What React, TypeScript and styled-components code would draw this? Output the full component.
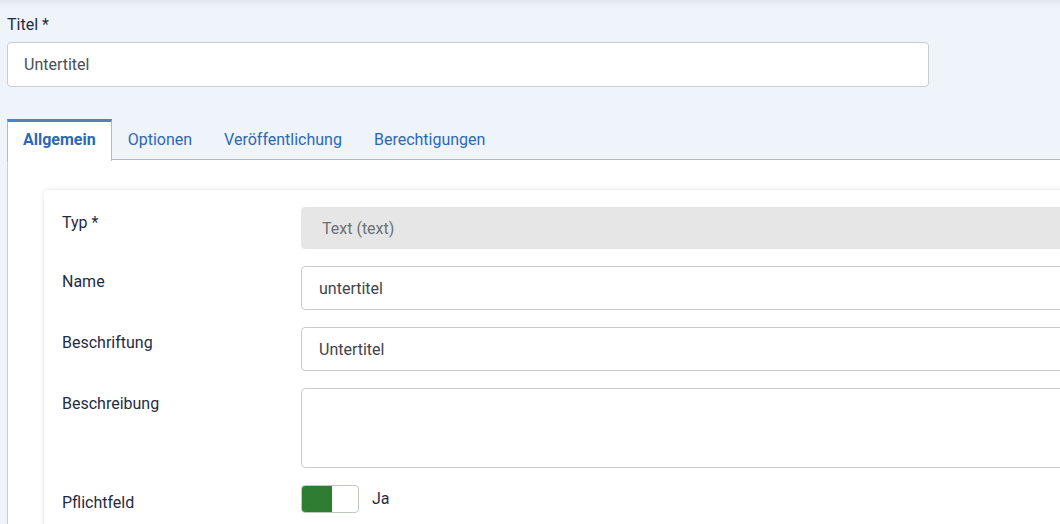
import React, { useState } from "react";
import styled, { createGlobalStyle } from "styled-components";

const GlobalStyle = createGlobalStyle`
    html, body {
        margin: 0;
        padding: 0;
        overflow: hidden;
    }
    body {
        background: #eff3fa;
        font-family: Roboto, "Liberation Sans", Arial, sans-serif;
        font-size: 16px;
        line-height: 1.5;
        color: #1f2c45;
    }
`;

const Page = styled.div`
    width: 100%;
    height: 524px;
    overflow: hidden;
    padding: 13px 0 0 7px;
    box-sizing: border-box;
    background: linear-gradient(#e2e7ee 0, #eef2f9 6px, #eff3fa 12px);
`;

const Label = styled.label`
    display: block;
    font-size: 16px;
    line-height: 24px;
    color: #1f2c45;
`;

const TitleInput = styled.input`
    display: block;
    box-sizing: border-box;
    width: 922px;
    height: 45px;
    margin-top: 5px;
    padding: 0 16px;
    border: 1px solid #c9cccf;
    border-radius: 4px;
    background: #fff;
    font: inherit;
    color: #4a4f55;
    outline: none;
`;

const TabList = styled.div`
    display: flex;
    margin-top: 32px;
    height: 41px;
    box-sizing: border-box;
    border-bottom: 1px solid #a9bbd2;
`;

const Tab = styled.button<{ $active?: boolean }>`
    box-sizing: border-box;
    height: ${(p) => (p.$active ? "42px" : "41px")};
    padding: 0 15px 4px;
    border: 0;
    background: ${(p) => (p.$active ? "#fff" : "transparent")};
    border-top: 3px solid ${(p) => (p.$active ? "#4f82c3" : "transparent")};
    border-left: 1px solid ${(p) => (p.$active ? "#a9bbd2" : "transparent")};
    border-right: 1px solid ${(p) => (p.$active ? "#a9bbd2" : "transparent")};
    font-family: inherit;
    font-size: 16px;
    font-weight: ${(p) => (p.$active ? 700 : 400)};
    color: #2a69b8;
    cursor: pointer;
`;

const TabPanel = styled.div`
    background: #fff;
    border-left: 1px solid #c3d0e2;
    margin-right: -60px;
    padding: 30px 0 0 36px;
    height: 400px;
`;

const Card = styled.div`
    background: #fff;
    border-radius: 5px;
    box-shadow: 0 0 5px rgba(0, 0, 0, 0.13);
    padding: 17px 0 0 18px;
    height: 360px;
`;

const FieldRow = styled.div`
    display: grid;
    grid-template-columns: 239px 1fr;
    align-items: start;
    margin-bottom: 17px;
`;

const FieldLabel = styled.div<{ $offset?: number }>`
    padding-top: ${(p) => p.$offset ?? 4}px;
    font-size: 16px;
    line-height: 24px;
    color: #1f2c45;
`;

const TextField = styled.input<{ $readOnly?: boolean }>`
    box-sizing: border-box;
    width: 100%;
    height: ${(p) => (p.$readOnly ? "42px" : "44px")};
    padding: 0 ${(p) => (p.$readOnly ? "20px" : "17px")};
    border: 1px solid ${(p) => (p.$readOnly ? "#e6e6e6" : "#c9cccf")};
    border-radius: 4px;
    background: ${(p) => (p.$readOnly ? "#e6e6e6" : "#fff")};
    font: inherit;
    color: ${(p) => (p.$readOnly ? "#6c7176" : "#3f444a")};
    outline: none;
`;

const TextArea = styled.textarea`
    box-sizing: border-box;
    width: 100%;
    height: 80px;
    padding: 8px 17px;
    border: 1px solid #c9cccf;
    border-radius: 4px;
    background: #fff;
    font: inherit;
    resize: none;
    outline: none;
    display: block;
`;

const SwitchWrap = styled.div`
    display: flex;
    align-items: center;
    gap: 13px;
    font-size: 16px;
    color: #1f2c45;
`;

const Switch = styled.button<{ $on: boolean }>`
    display: flex;
    width: 58px;
    height: 28px;
    padding: 0;
    box-sizing: border-box;
    border: 1px solid #bfc9bf;
    border-radius: 4px;
    background: #fff;
    overflow: hidden;
    cursor: pointer;
    justify-content: ${(p) => (p.$on ? "flex-start" : "flex-end")};
`;

const Knob = styled.span<{ $on: boolean }>`
    width: 30px;
    height: 100%;
    background: ${(p) => (p.$on ? "#2f7d33" : "#b8bcc0")};
`;

const tabs = ["Allgemein", "Optionen", "Veröffentlichung", "Berechtigungen"];

export default function App() {
    const [active, setActive] = useState(0);
    const [required, setRequired] = useState(true);

    return (
        <>
            <GlobalStyle />
            <Page>
                <Label>Titel *</Label>
                <TitleInput defaultValue="Untertitel" />

                <TabList>
                    {tabs.map((t, i) => (
                        <Tab key={t} $active={i === active} onClick={() => setActive(i)}>
                            {t}
                        </Tab>
                    ))}
                </TabList>

                <TabPanel>
                    <Card>
                        <FieldRow>
                            <FieldLabel>Typ *</FieldLabel>
                            <TextField $readOnly readOnly value="Text (text)" />
                        </FieldRow>
                        <FieldRow>
                            <FieldLabel>Name</FieldLabel>
                            <TextField defaultValue="untertitel" />
                        </FieldRow>
                        <FieldRow>
                            <FieldLabel>Beschriftung</FieldLabel>
                            <TextField defaultValue="Untertitel" />
                        </FieldRow>
                        <FieldRow>
                            <FieldLabel>Beschreibung</FieldLabel>
                            <TextArea />
                        </FieldRow>
                        <FieldRow>
                            <FieldLabel $offset={6}>Pflichtfeld</FieldLabel>
                            <SwitchWrap>
                                <Switch $on={required} onClick={() => setRequired(!required)}>
                                    <Knob $on={required} />
                                </Switch>
                                {required ? "Ja" : "Nein"}
                            </SwitchWrap>
                        </FieldRow>
                    </Card>
                </TabPanel>
            </Page>
        </>
    );
}
